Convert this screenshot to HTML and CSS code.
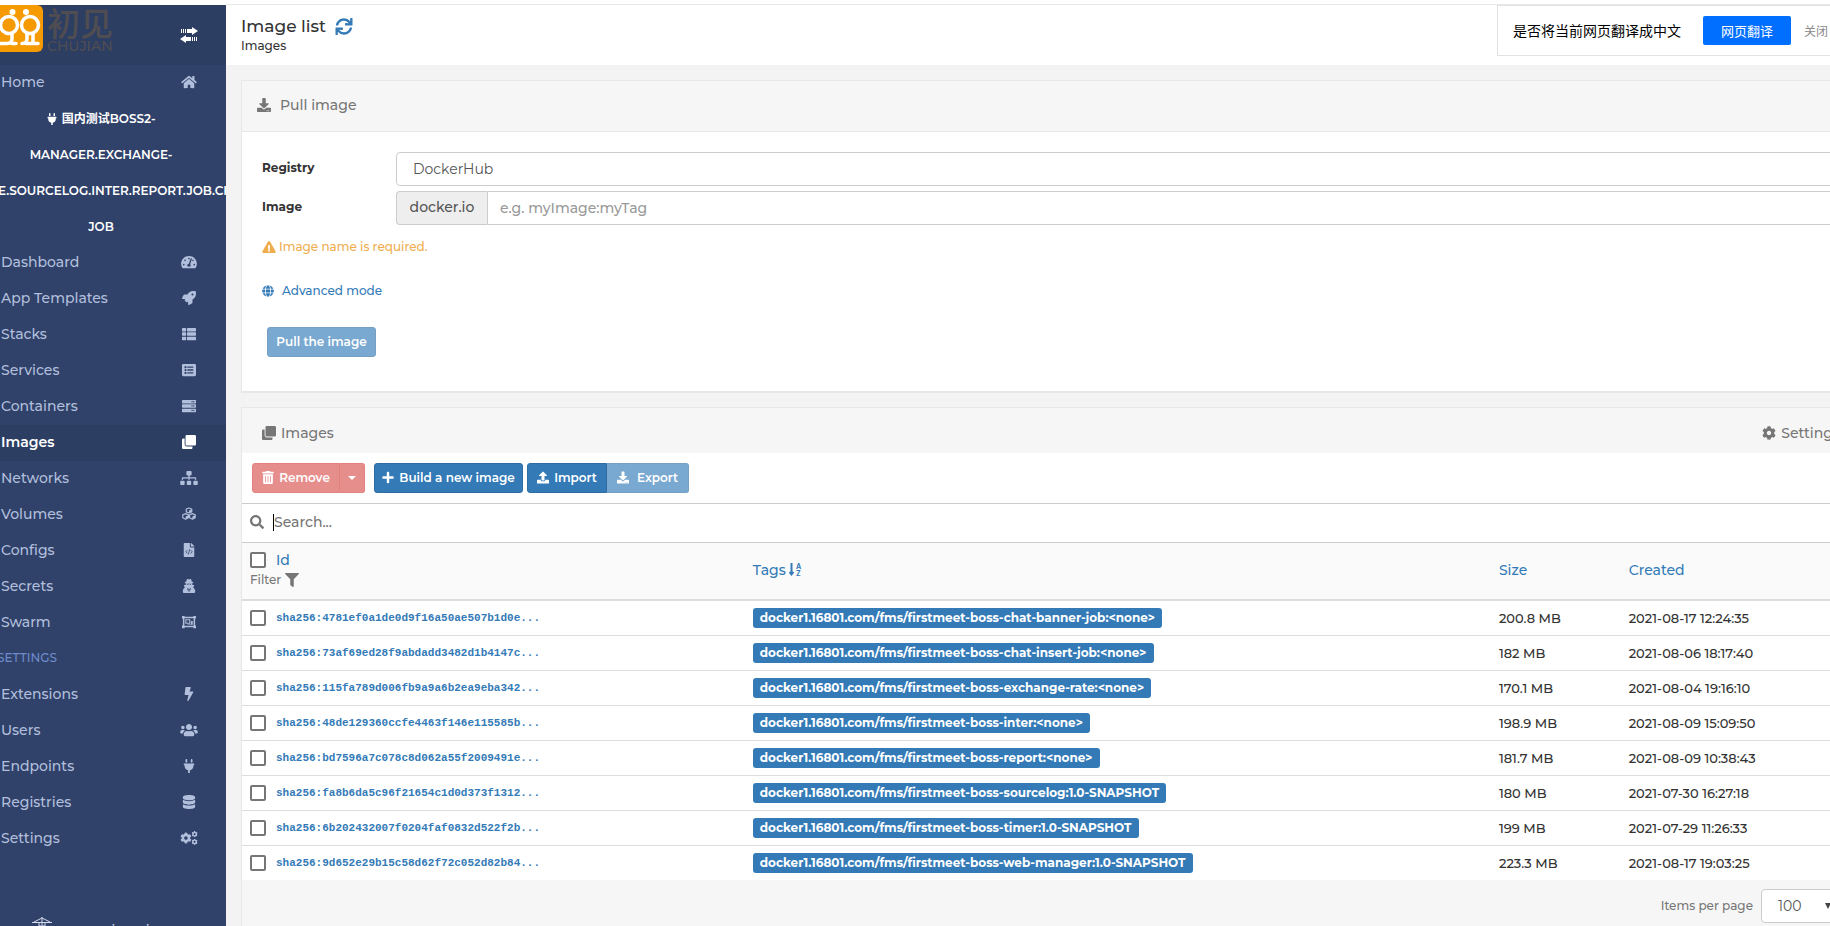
FILE: index.html
```html
<!DOCTYPE html>
<html lang="en">
<head>
<meta charset="utf-8">
<title>Image list</title>
<link rel="stylesheet" href="styles.css">
</head>
<body>
<svg class="sprite" aria-hidden="true">
  <symbol id="home" viewBox="0 0 576 512"><path d="M280.37 148.26L96 300.11V464a16 16 0 0 0 16 16l112.06-.29a16 16 0 0 0 15.92-16V368a16 16 0 0 1 16-16h64a16 16 0 0 1 16 16v95.64a16 16 0 0 0 16 16.05L464 480a16 16 0 0 0 16-16V300L295.67 148.26a12.19 12.19 0 0 0-15.3 0zM571.6 251.47L488 182.56V44.05a12 12 0 0 0-12-12h-56a12 12 0 0 0-12 12v72.61L318.47 43a48 48 0 0 0-61 0L4.34 251.47a12 12 0 0 0-1.6 16.9l25.5 31A12 12 0 0 0 45.15 301l235.22-193.74a12.19 12.19 0 0 1 15.3 0L530.9 301a12 12 0 0 0 16.9-1.6l25.5-31a12 12 0 0 0-1.7-16.93z"/></symbol>
  <symbol id="dashboard" viewBox="0 0 576 512"><path d="M288 32C128.94 32 0 160.94 0 320c0 52.8 14.25 102.26 39.06 144.8 5.61 9.62 16.3 15.2 27.44 15.2h443c11.14 0 21.83-5.58 27.44-15.2C561.75 422.26 576 372.8 576 320c0-159.06-128.94-288-288-288zm0 64c14.71 0 26.58 10.13 30.32 23.65-1.11 2.26-2.64 4.23-3.45 6.67l-9.22 27.67c-5.13 3.49-10.97 6.01-17.64 6.01-17.67 0-32-14.33-32-32S270.33 96 288 96zM96 384c-17.67 0-32-14.33-32-32s14.33-32 32-32 32 14.33 32 32-14.33 32-32 32zm48-160c-17.67 0-32-14.33-32-32s14.33-32 32-32 32 14.33 32 32-14.33 32-32 32zm246.77-72.41l-61.33 184C343.13 347.33 352 364.54 352 384c0 11.72-3.38 22.55-8.88 32H232.88c-5.5-9.45-8.88-20.28-8.88-32 0-33.94 26.5-61.43 59.9-63.59l61.34-184.01c4.17-12.56 17.73-19.45 30.36-15.17 12.57 4.19 19.35 17.79 15.17 30.36zm14.66 57.2l15.52-46.55c3.47-1.29 7.13-2.23 11.05-2.23 17.67 0 32 14.33 32 32s-14.33 32-32 32c-11.38-.01-20.89-6.28-26.57-15.22zM480 384c-17.67 0-32-14.33-32-32s14.33-32 32-32 32 14.33 32 32-14.33 32-32 32z"/></symbol>
  <symbol id="rocket" viewBox="0 0 512 512"><path d="M505.12019,19.09375c-1.18945-5.53125-6.65819-11-12.207-12.1875C460.716,0,435.507,0,410.40747,0,307.17523,0,245.26909,55.20312,199.05238,128H94.83772c-16.34763.01562-35.55658,11.875-42.88664,26.48438L2.51562,253.29688A28.4,28.4,0,0,0,0,264a24.00867,24.00867,0,0,0,24.00582,24H127.81618l-22.47457,22.46875c-11.36521,11.36133-12.99607,32.25781,0,45.25L156.24582,406.625c11.15623,11.1875,32.15619,13.15625,45.27726,0l22.47457-22.46875V488a24.00867,24.00867,0,0,0,24.00581,24,28.55934,28.55934,0,0,0,10.707-2.51562l98.72834-49.39063c14.62888-7.29687,26.50776-26.5,26.50776-42.85937V312.79688c72.59753-46.3125,128.03493-108.40626,128.03493-211.09376C512.07526,76.5,512.07526,51.29688,505.12019,19.09375ZM384.04033,168A40,40,0,1,1,424.05,128,40.02322,40.02322,0,0,1,384.04033,168Z"/></symbol>
  <symbol id="th-list" viewBox="0 0 512 512"><path d="M24 32h102a24 24 0 0 1 24 24v80a24 24 0 0 1-24 24H24a24 24 0 0 1-24-24V56a24 24 0 0 1 24-24zM205 32h283a24 24 0 0 1 24 24v80a24 24 0 0 1-24 24H205a24 24 0 0 1-24-24V56a24 24 0 0 1 24-24zM24 192h102a24 24 0 0 1 24 24v80a24 24 0 0 1-24 24H24a24 24 0 0 1-24-24v-80a24 24 0 0 1 24-24zM205 192h283a24 24 0 0 1 24 24v80a24 24 0 0 1-24 24H205a24 24 0 0 1-24-24v-80a24 24 0 0 1 24-24zM24 352h102a24 24 0 0 1 24 24v80a24 24 0 0 1-24 24H24a24 24 0 0 1-24-24v-80a24 24 0 0 1 24-24zM205 352h283a24 24 0 0 1 24 24v80a24 24 0 0 1-24 24H205a24 24 0 0 1-24-24v-80a24 24 0 0 1 24-24z"/></symbol>
  <symbol id="list-alt" viewBox="0 0 512 512"><path fill-rule="evenodd" d="M48 32h416a48 48 0 0 1 48 48v352a48 48 0 0 1-48 48H48a48 48 0 0 1-48-48V80a48 48 0 0 1 48-48zM128 112a40 40 0 1 0 .1 0zM128 216a40 40 0 1 0 .1 0zM128 320a40 40 0 1 0 .1 0zM204 128h200a12 12 0 0 1 12 12v24a12 12 0 0 1-12 12H204a12 12 0 0 1-12-12v-24a12 12 0 0 1 12-12zM204 232h200a12 12 0 0 1 12 12v24a12 12 0 0 1-12 12H204a12 12 0 0 1-12-12v-24a12 12 0 0 1 12-12zM204 336h200a12 12 0 0 1 12 12v24a12 12 0 0 1-12 12H204a12 12 0 0 1-12-12v-24a12 12 0 0 1 12-12z"/></symbol>
  <symbol id="server" viewBox="0 0 512 512"><path fill-rule="evenodd" d="M24 32h464a24 24 0 0 1 24 24v80a24 24 0 0 1-24 24H24a24 24 0 0 1-24-24V56a24 24 0 0 1 24-24zM432 72a24 24 0 1 0 .1 0zM368 72a24 24 0 1 0 .1 0zM24 192h464a24 24 0 0 1 24 24v80a24 24 0 0 1-24 24H24a24 24 0 0 1-24-24v-80a24 24 0 0 1 24-24zM432 232a24 24 0 1 0 .1 0zM368 232a24 24 0 1 0 .1 0zM24 352h464a24 24 0 0 1 24 24v80a24 24 0 0 1-24 24H24a24 24 0 0 1-24-24v-80a24 24 0 0 1 24-24zM432 392a24 24 0 1 0 .1 0zM368 392a24 24 0 1 0 .1 0z"/></symbol>
  <symbol id="clone" viewBox="0 0 512 512"><path d="M464 0c26.51 0 48 21.49 48 48v288c0 26.51-21.49 48-48 48H176c-26.51 0-48-21.49-48-48V48c0-26.51 21.49-48 48-48h288M176 416c-44.112 0-80-35.888-80-80V128H48c-26.51 0-48 21.49-48 48v288c0 26.51 21.49 48 48 48h288c26.51 0 48-21.49 48-48v-48H176z"/></symbol>
  <symbol id="sitemap" viewBox="0 0 640 512"><path d="M128 352H32c-17.67 0-32 14.33-32 32v96c0 17.67 14.33 32 32 32h96c17.67 0 32-14.33 32-32v-96c0-17.67-14.33-32-32-32zm-24-80h192v48h48v-48h192v48h48v-57.59c0-21.17-17.23-38.41-38.41-38.41H344v-64h40c17.67 0 32-14.33 32-32V32c0-17.67-14.33-32-32-32H256c-17.67 0-32 14.33-32 32v96c0 17.67 14.33 32 32 32h40v64H94.41C73.23 224 56 241.23 56 262.41V320h48v-48zm264 80h-96c-17.67 0-32 14.33-32 32v96c0 17.67 14.33 32 32 32h96c17.67 0 32-14.33 32-32v-96c0-17.67-14.33-32-32-32zm240 0h-96c-17.67 0-32 14.33-32 32v96c0 17.67 14.33 32 32 32h96c17.67 0 32-14.33 32-32v-96c0-17.67-14.33-32-32-32z"/></symbol>
  <symbol id="cubes" viewBox="0 0 512 512"><g stroke="currentColor" stroke-width="44" stroke-linejoin="round" fill="none"><path d="M256 36l100 38v104l-100 42-100-42V74zM132 244l102 40v112l-102 52-104-52V284zM380 244l104 40v112l-104 52-102-52V284z"/></g><path d="M256 130l96-44v92l-96 42zM134 344l98-44v96l-98 48zM378 344l98-44v96l-98 48z"/></symbol>
  <symbol id="file-code" viewBox="0 0 384 512"><path d="M384 121.941V128H256V0h6.059c6.365 0 12.47 2.529 16.971 7.029l97.941 97.941A24.005 24.005 0 0 1 384 121.941zM224 136V0H24C10.745 0 0 10.745 0 24v464c0 13.255 10.745 24 24 24h336c13.255 0 24-10.745 24-24V160H248c-13.2 0-24-10.8-24-24z"/><path class="cut" d="M130 260l-56 62 56 62M254 260l56 62-56 62M218 228l-50 186"/></symbol>
  <symbol id="user-secret" viewBox="0 0 448 512"><path fill-rule="evenodd" d="M144 18c22-38 58-2 80-2s58-36 80 2l25 78h31c32 0 32 32 8 42l-20 6v48c0 8-4 18-8 28h52c18 0 24 12 18 26l-34 70c42 20 72 60 72 110v38c0 26-22 48-48 48H48c-26 0-48-22-48-48v-38c0-50 30-90 72-110L40 250c-6-16 2-30 18-30h50c-4-10-8-20-8-28v-48l-20-6c-24-10-24-42 8-42h31zM136 176c8 44 66 44 80 4h16c14 40 72 40 80-4zM152 318l46 162 18-116zM296 318l-46 162-18-116z"/></symbol>
  <symbol id="object-group" viewBox="0 0 512 512"><path fill-rule="evenodd" d="M0 32h96v32h320V32h96v96h-32v256h32v96h-96v-32H96v32H0v-96h32V128H0zM88 120v272h336V120zM120 152h184v168H120zM160 192v88h104v-88zM328 216h64v144H200v-20h128z"/></symbol>
  <symbol id="bolt" viewBox="0 0 320 512"><path d="M296 160H180.6l42.6-129.8C227.2 15 215.7 0 200 0H56C44 0 33.8 8.9 32.2 20.8l-32 240C-1.7 275.2 9.5 288 24 288h118.7L96.6 482.5c-3.6 15.2 8 29.5 23.3 29.5 8.4 0 16.4-4.4 20.8-12l176-304c9.3-15.9-2.2-36-20.7-36z"/></symbol>
  <symbol id="users" viewBox="0 0 640 512"><path d="M96 224c35.3 0 64-28.7 64-64s-28.7-64-64-64-64 28.7-64 64 28.7 64 64 64zm448 0c35.3 0 64-28.7 64-64s-28.7-64-64-64-64 28.7-64 64 28.7 64 64 64zm32 32h-64c-17.6 0-33.5 7.1-45.1 18.6 40.3 22.1 68.9 62 75.1 109.4h66c17.7 0 32-14.3 32-32v-32c0-35.3-28.7-64-64-64zm-256 0c61.9 0 112-50.1 112-112S381.9 32 320 32 208 82.1 208 144s50.1 112 112 112zm76.8 32h-8.3c-20.8 10-43.9 16-68.5 16s-47.6-6-68.5-16h-8.3C179.6 288 128 339.6 128 403.2V432c0 26.5 21.5 48 48 48h288c26.5 0 48-21.5 48-48v-28.8c0-63.6-51.6-115.2-115.2-115.2zm-223.7-13.4C161.5 263.1 145.6 256 128 256H64c-35.3 0-64 28.7-64 64v32c0 17.7 14.3 32 32 32h65.9c6.3-47.4 34.9-87.3 75.2-109.4z"/></symbol>
  <symbol id="plug" viewBox="0 0 384 512"><path d="M320 32a32 32 0 0 0-64 0v96h64zm48 128H16A16 16 0 0 0 0 176v32a16 16 0 0 0 16 16h16v32a160.07 160.07 0 0 0 128 156.8V512h64v-99.2A160.07 160.07 0 0 0 352 256v-32h16a16 16 0 0 0 16-16v-32a16 16 0 0 0-16-16zM128 32a32 32 0 0 0-64 0v96h64z"/></symbol>
  <symbol id="database" viewBox="0 0 448 512"><path d="M448 73.143v45.714C448 159.143 347.667 192 224 192S0 159.143 0 118.857V73.143C0 32.857 100.333 0 224 0s224 32.857 224 73.143zM448 176v102.857C448 319.143 347.667 352 224 352S0 319.143 0 278.857V176c48.125 33.143 136.208 48.572 224 48.572S399.874 209.143 448 176zm0 160v102.857C448 479.143 347.667 512 224 512S0 479.143 0 438.857V336c48.125 33.143 136.208 48.572 224 48.572S399.874 369.143 448 336z"/></symbol>
  <symbol id="cog" viewBox="0 0 512 512"><path d="M487.4 315.7l-42.6-24.6c4.3-23.2 4.3-47 0-70.2l42.6-24.6c4.9-2.8 7.1-8.6 5.5-14-11.1-35.6-30-67.8-54.7-94.6-3.8-4.1-10-5.1-14.8-2.3L380.8 110c-17.9-15.4-38.5-27.3-60.8-35.1V25.8c0-5.6-3.9-10.5-9.4-11.7-36.7-8.2-74.3-7.8-109.2 0-5.5 1.2-9.4 6.1-9.4 11.7V75c-22.2 7.9-42.8 19.8-60.8 35.1L88.7 85.5c-4.9-2.8-11-1.9-14.8 2.3-24.7 26.7-43.6 58.9-54.7 94.6-1.7 5.4.6 11.2 5.5 14L67.3 221c-4.3 23.2-4.3 47 0 70.2l-42.6 24.6c-4.9 2.8-7.1 8.6-5.5 14 11.1 35.6 30 67.8 54.7 94.6 3.8 4.1 10 5.1 14.8 2.3l42.6-24.6c17.9 15.4 38.5 27.3 60.8 35.1v49.2c0 5.6 3.9 10.5 9.4 11.7 36.7 8.2 74.3 7.8 109.2 0 5.5-1.2 9.4-6.1 9.4-11.7v-49.2c22.2-7.9 42.8-19.8 60.8-35.1l42.6 24.6c4.9 2.8 11 1.9 14.8-2.3 24.7-26.7 43.6-58.9 54.7-94.6 1.5-5.5-.7-11.3-5.6-14.1zM256 336c-44.1 0-80-35.9-80-80s35.9-80 80-80 80 35.9 80 80-35.9 80-80 80z"/></symbol>
  <symbol id="cogs" viewBox="0 0 640 512"><use href="#cog" x="-8" y="48" width="432" height="416"/><use href="#cog" x="410" y="0" width="230" height="230"/><use href="#cog" x="410" y="282" width="230" height="230"/></symbol>
  <symbol id="exchange" viewBox="0 0 18 16"><path d="M1 2h1v4H1zM3 2h1v4H3zM5 2h1v4H5zM7 2h5V0l6 4-6 4V6H7zM16 10h1v4h-1zM14 10h1v4h-1zM12 10h1v4h-1zM11 10H6V8l-6 4 6 4v-2h5z"/></symbol>
  <symbol id="download" viewBox="0 0 512 512"><path d="M216 0h80c13.300 0 24 10.700 24 24v168h87.700c17.800 0 26.700 21.500 14.100 34.100L269.700 378.300c-7.500 7.500-19.800 7.500-27.300 0L90.100 226.100c-12.600-12.600-3.700-34.100 14.100-34.100H192V24c0-13.300 10.700-24 24-24zm296 376v112c0 13.300-10.700 24-24 24H24c-13.300 0-24-10.700-24-24V376c0-13.300 10.700-24 24-24h146.700l49 49c20.100 20.100 52.500 20.100 72.600 0l49-49H488c13.300 0 24 10.700 24 24zm-124 88c0-11-9-20-20-20s-20 9-20 20 9 20 20 20 20-9 20-20zm64 0c0-11-9-20-20-20s-20 9-20 20 9 20 20 20 20-9 20-20z"/></symbol>
  <symbol id="upload" viewBox="0 0 512 512"><path d="M296 384h-80c-13.300 0-24-10.700-24-24V192h-87.700c-17.800 0-26.700-21.500-14.100-34.100L242.300 5.700c7.500-7.500 19.800-7.500 27.300 0l152.200 152.200c12.600 12.600 3.700 34.100-14.100 34.100H320v168c0 13.300-10.700 24-24 24zm216-8v112c0 13.300-10.700 24-24 24H24c-13.300 0-24-10.700-24-24V376c0-13.300 10.700-24 24-24h136v8c0 30.900 25.100 56 56 56h80c30.900 0 56-25.100 56-56v-8h136c13.300 0 24 10.700 24 24z"/></symbol>
  <symbol id="sync" viewBox="0 0 512 512"><path d="M440.650 12.570l4 82.770A247.160 247.160 0 0 0 255.830 8C134.730 8 33.910 94.920 12.290 209.820A12 12 0 0 0 24.090 224h49.050a12 12 0 0 0 11.670-9.260 175.910 175.910 0 0 1 317-56.940l-101.460-4.860a12 12 0 0 0-12.570 12v47.410a12 12 0 0 0 12 12H500a12 12 0 0 0 12-12V12a12 12 0 0 0-12-12h-47.370a12 12 0 0 0-11.980 12.570zM255.830 432a175.610 175.610 0 0 1-146-77.800l101.800 4.870a12 12 0 0 0 12.570-12v-47.400a12 12 0 0 0-12-12H12a12 12 0 0 0-12 12V500a12 12 0 0 0 12 12h47.350a12 12 0 0 0 12-12.600l-4.150-82.570A247.170 247.170 0 0 0 255.830 504c121.110 0 221.930-86.920 243.550-201.820a12 12 0 0 0-11.800-14.180h-49.050a12 12 0 0 0-11.670 9.260A175.860 175.860 0 0 1 255.830 432z"/></symbol>
  <symbol id="search" viewBox="0 0 512 512"><path d="M505 442.700L405.300 343c-4.500-4.500-10.600-7-17-7H372c27.600-35.300 44-79.700 44-128C416 93.100 322.900 0 208 0S0 93.100 0 208s93.100 208 208 208c48.300 0 92.700-16.400 128-44v16.300c0 6.400 2.500 12.500 7 17l99.700 99.700c9.400 9.400 24.600 9.400 33.900 0l28.300-28.300c9.400-9.400 9.400-24.600.1-34zM208 336c-70.700 0-128-57.200-128-128 0-70.700 57.200-128 128-128 70.700 0 128 57.200 128 128 0 70.700-57.200 128-128 128z"/></symbol>
  <symbol id="filter" viewBox="0 0 512 512"><path d="M487.976 0H24.028C2.710 0-8.047 25.866 7.058 40.971L192 225.941V432c0 7.831 3.821 15.170 10.237 19.662l80 55.980C298.020 518.690 320 507.493 320 487.980V225.941l184.947-184.970C520.021 25.896 509.338 0 487.976 0z"/></symbol>
  <symbol id="warning" viewBox="0 0 576 512"><path d="M569.517 440.013C587.975 472.007 564.806 512 527.940 512H48.054c-36.937 0-59.999-40.055-41.577-71.987L246.423 23.985c18.467-32.009 64.720-31.951 83.154 0l239.940 416.028zM288 354c-25.405 0-46 20.595-46 46s20.595 46 46 46 46-20.595 46-46-20.595-46-46-46zm-43.673-165.346l7.418 136c.347 6.364 5.609 11.346 11.982 11.346h48.546c6.373 0 11.635-4.982 11.982-11.346l7.418-136c.375-6.874-5.098-12.654-11.982-12.654h-63.383c-6.884 0-12.356 5.780-11.981 12.654z"/></symbol>
  <symbol id="globe" viewBox="0 0 496 512"><path d="M336.500 160C322 70.700 287.800 8 248 8s-74 62.700-88.500 152h177zM152 256c0 22.200 1.200 43.500 3.300 64h185.300c2.100-20.500 3.300-41.800 3.300-64s-1.200-43.500-3.300-64H155.300c-2.100 20.500-3.300 41.800-3.300 64zm324.700-96c-28.600-67.900-86.500-120.400-158-141.600 24.400 33.800 41.200 84.700 50 141.600h108zM177.200 18.400C105.800 39.600 47.800 92.100 19.300 160h108c8.700-56.900 25.500-107.800 49.900-141.600zM487.400 192H372.700c2.100 21 3.300 42.500 3.300 64s-1.200 43-3.300 64h114.600c5.500-20.500 8.600-41.800 8.600-64s-3.100-43.500-8.500-64zM120 256c0-21.500 1.200-43 3.300-64H8.600C3.200 212.500 0 233.800 0 256s3.200 43.500 8.600 64h114.600c-2-21-3.200-42.500-3.200-64zm39.500 96c14.500 89.300 48.700 152 88.500 152s74-62.700 88.500-152h-177zm159.300 141.600c71.400-21.200 129.400-73.700 158-141.600h-108c-8.800 56.900-25.600 107.800-50 141.600zM19.300 352c28.600 67.900 86.500 120.400 158 141.600-24.400-33.800-41.200-84.700-50-141.600h-108z"/></symbol>
  <symbol id="trash" viewBox="0 0 448 512"><path fill-rule="evenodd" d="M32 464a48 48 0 0 0 48 48h288a48 48 0 0 0 48-48V128H32zm272-256a16 16 0 0 1 32 0v224a16 16 0 0 1-32 0zm-96 0a16 16 0 0 1 32 0v224a16 16 0 0 1-32 0zm-96 0a16 16 0 0 1 32 0v224a16 16 0 0 1-32 0zM432 32H312l-9.400-18.700A24 24 0 0 0 281.100 0H166.800a23.720 23.720 0 0 0-21.400 13.300L136 32H16A16 16 0 0 0 0 48v32a16 16 0 0 0 16 16h416a16 16 0 0 0 16-16V48a16 16 0 0 0-16-16z"/></symbol>
  <symbol id="plus" viewBox="0 0 448 512"><path d="M416 208H272V64c0-17.670-14.330-32-32-32h-32c-17.670 0-32 14.330-32 32v144H32c-17.670 0-32 14.330-32 32v32c0 17.670 14.330 32 32 32h144v144c0 17.670 14.330 32 32 32h32c17.670 0 32-14.330 32-32V304h144c17.670 0 32-14.330 32-32v-32c0-17.670-14.330-32-32-32z"/></symbol>
</svg>

<div class="app">
  <aside class="sidebar">
    <div class="brand">
      <svg class="brand-mark" viewBox="0 0 43 47" aria-hidden="true">
        <rect x="-6" width="49" height="47" rx="6" fill="#f59a00"/>
        <g fill="#fff"><circle cx="12.500" cy="7" r="3"/><circle cx="26" cy="7" r="3"/></g>
        <g fill="none" stroke="#fff" stroke-width="3.500" stroke-linecap="round"><circle cx="9" cy="20" r="8.500"/><circle cx="30" cy="20" r="8.500"/><path d="M12 28.500v5q0 5-5 5H0M12 38.500h4M27 28.500v5q0 5-5 5M26 38.500h12M33 28.500v10"/></g>
      </svg>
      <div class="brand-name"><span class="brand-cn">初见</span><span class="brand-en">CHUJIAN</span></div>
      <button class="toggle" aria-label="Toggle sidebar"><svg class="toggle-icon"><use href="#exchange"/></svg></button>
    </div>
    <nav class="menu">
      <a class="item" href="#">Home<svg class="icon"><use href="#home"/></svg></a>
      <div class="endpoint"><span><svg class="icon-small"><use href="#plug"/></svg> 国内测试BOSS2-</span><span>MANAGER.EXCHANGE-</span><span class="long">E.SOURCELOG.INTER.REPORT.JOB.CH</span><span>JOB</span></div>
      <a class="item" href="#">Dashboard<svg class="icon"><use href="#dashboard"/></svg></a>
      <a class="item" href="#">App Templates<svg class="icon"><use href="#rocket"/></svg></a>
      <a class="item" href="#">Stacks<svg class="icon"><use href="#th-list"/></svg></a>
      <a class="item" href="#">Services<svg class="icon"><use href="#list-alt"/></svg></a>
      <a class="item" href="#">Containers<svg class="icon"><use href="#server"/></svg></a>
      <a class="item active" href="#">Images<svg class="icon"><use href="#clone"/></svg></a>
      <a class="item" href="#">Networks<svg class="icon"><use href="#sitemap"/></svg></a>
      <a class="item" href="#">Volumes<svg class="icon"><use href="#cubes"/></svg></a>
      <a class="item" href="#">Configs<svg class="icon"><use href="#file-code"/></svg></a>
      <a class="item" href="#">Secrets<svg class="icon"><use href="#user-secret"/></svg></a>
      <a class="item" href="#">Swarm<svg class="icon"><use href="#object-group"/></svg></a>
      <div class="section">SETTINGS</div>
      <a class="item" href="#">Extensions<svg class="icon"><use href="#bolt"/></svg></a>
      <a class="item" href="#">Users<svg class="icon"><use href="#users"/></svg></a>
      <a class="item" href="#">Endpoints<svg class="icon"><use href="#plug"/></svg></a>
      <a class="item" href="#">Registries<svg class="icon"><use href="#database"/></svg></a>
      <a class="item" href="#">Settings<svg class="icon"><use href="#cogs"/></svg></a>
    </nav>
    <div class="sidebar-foot">
      <svg class="crane" viewBox="0 0 20 24" fill="none" stroke="#d5dbea" aria-hidden="true"><path d="M0 5.500h20M2 5l8-4 8 4M10 0v20M7 5v12M13 5v12M7 9h6"/></svg>
      <span>portainer.io</span>
    </div>
  </aside>

  <main class="main">
    <header class="topbar">
      <div class="titles">
        <h1>Image list <a href="#" aria-label="Refresh"><svg class="refresh"><use href="#sync"/></svg></a></h1>
        <div class="crumb">Images</div>
      </div>
      <div class="translate">
        <span>是否将当前网页翻译成中文</span>
        <button class="translate-go">网页翻译</button>
        <button class="translate-close">关闭</button>
      </div>
    </header>

    <div class="content">
      <section class="widget">
        <h2 class="widget-head tall"><svg class="icon"><use href="#download"/></svg>Pull image</h2>
        <form class="pull">
          <div class="field"><label for="registry">Registry</label><select id="registry" class="control"><option>DockerHub</option></select></div>
          <div class="field"><label for="image">Image</label><div class="group"><span class="addon">docker.io</span><input id="image" class="control" type="text" placeholder="e.g. myImage:myTag"></div></div>
          <p class="warn"><svg class="icon-warn"><use href="#warning"/></svg>Image name is required.</p>
          <a class="advanced" href="#"><svg class="icon-small"><use href="#globe"/></svg>Advanced mode</a>
          <button class="btn primary" type="button" disabled>Pull the image</button>
        </form>
      </section>

      <section class="widget">
        <div class="widget-head"><h2><svg class="icon"><use href="#clone"/></svg>Images</h2><a class="settings" href="#"><svg class="icon"><use href="#cog"/></svg>Settings</a></div>
        <div class="toolbar">
          <div class="pair"><button class="btn danger" disabled><svg class="icon-btn"><use href="#trash"/></svg>Remove</button><button class="btn danger drop" disabled aria-label="More"><i class="caret"></i></button></div>
          <button class="btn primary build"><svg class="icon-btn"><use href="#plus"/></svg>Build a new image</button>
          <div class="pair"><button class="btn primary"><svg class="icon-btn"><use href="#upload"/></svg>Import</button><button class="btn primary" disabled><svg class="icon-btn wide"><use href="#download"/></svg>Export</button></div>
        </div>
        <div class="searchbar"><svg class="icon"><use href="#search"/></svg><i class="cursor"></i><input type="text" aria-label="Search" placeholder="Search..."></div>
        <table class="images">
          <colgroup><col class="c-id"><col class="c-tags"><col class="c-size"><col class="c-created"></colgroup>
          <thead><tr>
            <th><div class="id-line"><input type="checkbox" aria-label="Select all"><a href="#">Id</a></div><div class="filter">Filter<svg class="icon"><use href="#filter"/></svg></div></th>
            <th><a href="#">Tags <svg class="sort" viewBox="0 0 13 14" aria-hidden="true"><path d="M2.500 0v11M.5 9l2 2.500 2-2.500"/><text x="7" y="6">A</text><text x="7" y="13">Z</text></svg></a></th>
            <th><a href="#">Size</a></th>
            <th><a href="#">Created</a></th>
          </tr></thead>
          <tbody>
            <tr><td><div class="id-line"><input type="checkbox" aria-label="Select image 1"><a class="sha" href="#">sha256:4781ef0a1de0d9f16a50ae507b1d0e...</a></div></td><td><span class="tag">docker1.16801.com/fms/firstmeet-boss-chat-banner-job:&lt;none&gt;</span></td><td>200.8 MB</td><td>2021-08-17 12:24:35</td></tr>
            <tr><td><div class="id-line"><input type="checkbox" aria-label="Select image 2"><a class="sha" href="#">sha256:73af69ed28f9abdadd3482d1b4147c...</a></div></td><td><span class="tag">docker1.16801.com/fms/firstmeet-boss-chat-insert-job:&lt;none&gt;</span></td><td>182 MB</td><td>2021-08-06 18:17:40</td></tr>
            <tr><td><div class="id-line"><input type="checkbox" aria-label="Select image 3"><a class="sha" href="#">sha256:115fa789d006fb9a9a6b2ea9eba342...</a></div></td><td><span class="tag">docker1.16801.com/fms/firstmeet-boss-exchange-rate:&lt;none&gt;</span></td><td>170.1 MB</td><td>2021-08-04 19:16:10</td></tr>
            <tr><td><div class="id-line"><input type="checkbox" aria-label="Select image 4"><a class="sha" href="#">sha256:48de129360ccfe4463f146e115585b...</a></div></td><td><span class="tag">docker1.16801.com/fms/firstmeet-boss-inter:&lt;none&gt;</span></td><td>198.9 MB</td><td>2021-08-09 15:09:50</td></tr>
            <tr><td><div class="id-line"><input type="checkbox" aria-label="Select image 5"><a class="sha" href="#">sha256:bd7596a7c078c8d062a55f2009491e...</a></div></td><td><span class="tag">docker1.16801.com/fms/firstmeet-boss-report:&lt;none&gt;</span></td><td>181.7 MB</td><td>2021-08-09 10:38:43</td></tr>
            <tr><td><div class="id-line"><input type="checkbox" aria-label="Select image 6"><a class="sha" href="#">sha256:fa8b6da5c96f21654c1d0d373f1312...</a></div></td><td><span class="tag">docker1.16801.com/fms/firstmeet-boss-sourcelog:1.0-SNAPSHOT</span></td><td>180 MB</td><td>2021-07-30 16:27:18</td></tr>
            <tr><td><div class="id-line"><input type="checkbox" aria-label="Select image 7"><a class="sha" href="#">sha256:6b202432007f0204faf0832d522f2b...</a></div></td><td><span class="tag">docker1.16801.com/fms/firstmeet-boss-timer:1.0-SNAPSHOT</span></td><td>199 MB</td><td>2021-07-29 11:26:33</td></tr>
            <tr><td><div class="id-line"><input type="checkbox" aria-label="Select image 8"><a class="sha" href="#">sha256:9d652e29b15c58d62f72c052d82b84...</a></div></td><td><span class="tag">docker1.16801.com/fms/firstmeet-boss-web-manager:1.0-SNAPSHOT</span></td><td>223.3 MB</td><td>2021-08-17 19:03:25</td></tr>
          </tbody>
        </table>
        <div class="pager"><label for="per-page">Items per page</label><div class="per-page"><select id="per-page" class="control"><option>100</option></select><i class="arrow"></i></div></div>
      </section>
    </div>
  </main>
</div>
</body>
</html>
```

FILE: styles.css
```css
* { box-sizing: border-box; }

body {
  margin: 0;
  height: 100vh;
  overflow: hidden;
  background: #fff;
  color: #333;
  font: 13px/18px Montserrat, Inter, "Noto Sans CJK SC", sans-serif;
}

a { color: #337ab7; text-decoration: none; }
button, input, select { font-family: inherit; }
h1, h2, p { margin: 0; font-weight: 400; }
svg { fill: currentColor; flex: none; }

.sprite { display: none; }
.icon { width: 16px; height: 14px; }
.icon-small { width: 12px; height: 12px; }
.icon-warn { width: 14px; height: 12px; }
.cut { fill: none; stroke: #30426a; stroke-width: 30px; }

.app {
  display: flex;
  height: 100vh;
  padding-top: 4px;
  overflow: hidden;
}

/* Sidebar */
.sidebar {
  flex: none;
  width: 226px;
  margin-top: 1px;
  overflow: hidden;
  background: #30426a;
  color: #fff;
}

.brand {
  display: flex;
  align-items: flex-start;
  height: 60px;
  background: #2d3e63;
}

.brand-mark { width: 43px; height: 47px; }

.brand-name {
  display: flex;
  flex-direction: column;
  margin-left: 4px;
  color: #504d52;
  font-weight: 500;
}

.brand-cn { font: 500 33px/34px "Noto Sans CJK SC", sans-serif; }
.brand-en { font-size: 14px; line-height: 14px; }

.toggle {
  margin: 22px 28px 0 auto;
  padding: 0;
  border: 0;
  background: none;
  color: #fff;
}

.toggle-icon { display: block; width: 18px; height: 16px; }

.item {
  display: flex;
  align-items: center;
  justify-content: space-between;
  height: 36px;
  padding: 0 28px 2px 1px;
  color: #b2bfdc;
  font-size: 14px;
  font-weight: 500;
}

.item .icon { width: 18px; }
.item.active { background: #2d3e63; color: #fff; font-weight: 600; }

.endpoint {
  display: flex;
  flex-direction: column;
  padding-right: 24px;
  font-size: 12px;
  font-weight: 600;
  line-height: 36px;
  text-align: center;
  white-space: nowrap;
}

.endpoint .long { margin-left: -2px; text-align: left; }
.endpoint svg { vertical-align: -2px; }

.section {
  height: 36px;
  margin-left: -3px;
  color: #6f8bcb;
  font-size: 12px;
  font-weight: 500;
  line-height: 34px;
}

.sidebar-foot {
  display: flex;
  gap: 16px;
  padding: 56px 32px 0;
  color: #d5dbea;
  font-size: 16px;
}

.sidebar-foot span { padding-top: 10px; }
.crane { width: 20px; height: 24px; margin-top: 4px; fill: none; }

/* Main column */
.main {
  flex: 1;
  min-width: 0;
  border-top: 1px solid #e7e7e7;
  background: #f3f3f3;
}

.topbar {
  display: flex;
  justify-content: space-between;
  height: 60px;
  background: #fff;
}

.titles { padding: 10px 0 0 15px; }

h1 {
  display: flex;
  gap: 9px;
  align-items: center;
  font-size: 17px;
  font-weight: 500;
  line-height: 22px;
}

.refresh { display: block; width: 18px; height: 17px; }
.crumb { font-size: 12px; font-weight: 500; line-height: 18px; }

.translate {
  display: flex;
  align-items: center;
  height: 51px;
  margin-right: -1px;
  padding: 0 2px 0 15px;
  border: 1px solid #e3e3e3;
  color: #000;
  font-size: 14px;
  white-space: nowrap;
}

.translate button { border: 0; font-size: 12px; }

.translate .translate-go {
  width: 88px;
  height: 29px;
  margin: 0 13px 0 22px;
  border-radius: 2px;
  background: #006eff;
  color: #fff;
  font-size: 13px;
}

.translate .translate-close { padding: 0; background: none; color: #888; }

.content {
  display: flex;
  flex-direction: column;
  gap: 14px;
  margin-right: -50px;
  padding: 15px 15px 0;
}

.widget {
  border: 1px solid #e7e7e7;
  border-bottom-width: 2px;
  background: #fff;
}

.widget-head {
  display: flex;
  align-items: center;
  justify-content: space-between;
  height: 45px;
  padding: 4px 24px 0 19px;
  background: #f6f6f6;
  color: #767676;
}

.widget-head h2,
.settings {
  display: flex;
  gap: 4px;
  align-items: center;
  color: #767676;
  font-size: 14px;
  font-weight: 500;
}

.widget-head.tall {
  justify-content: flex-start;
  gap: 8px;
  height: 51px;
  padding: 0 14px 2px;
  border-bottom: 1px solid #e7e7e7;
  font-size: 14px;
  font-weight: 500;
}

.pull { padding: 20px 20px 34px; }

.field { display: flex; margin-bottom: 5px; }

.field label {
  width: 134px;
  padding-top: 7px;
  font-size: 12px;
  font-weight: 700;
}

.control {
  flex: 1;
  min-width: 0;
  height: 34px;
  border: 1px solid #ccc;
  border-radius: 4px;
  background: #fff;
  color: #555;
  font-size: 14px;
  appearance: none;
}

select.control { padding: 0 16px; }
.group { display: flex; flex: 1; }
.group .control { padding: 0 12px; border-radius: 0 4px 4px 0; font-weight: 500; }
.control::placeholder { color: #999; }

.addon {
  width: 91px;
  border: 1px solid #ccc;
  border-right: 0;
  border-radius: 4px 0 0 4px;
  background: #eee;
  color: #555;
  font-size: 14px;
  font-weight: 500;
  line-height: 30px;
  text-align: center;
}

.warn {
  display: flex;
  gap: 3px;
  align-items: center;
  padding-top: 8px;
  color: #f0ad4e;
  font-size: 12px;
  font-weight: 500;
}

.advanced {
  display: flex;
  gap: 8px;
  align-items: center;
  margin: 26px 0 27px;
  font-size: 12px;
  font-weight: 500;
}

/* Buttons */
.btn {
  display: inline-flex;
  gap: 5px;
  align-items: center;
  justify-content: center;
  height: 30px;
  padding: 0 10px 2px;
  border: 1px solid #2e6da4;
  border-radius: 3px;
  color: #fff;
  font-size: 12px;
  font-weight: 600;
  white-space: nowrap;
}

.primary { background: #337ab7; }
.danger { border-color: #d43f3a; background: #d9534f; }
.btn:disabled { opacity: .65; }
.pull .btn { width: 109px; margin-left: 5px; }
.icon-btn { width: 12px; height: 13px; }
.icon-btn.wide { margin-right: 3px; }

.toolbar {
  display: flex;
  gap: 4px;
  padding: 10px;
  border-bottom: 1px solid #ccc;
}

.pair { display: flex; }
.pair .btn:first-child { border-radius: 3px 0 0 3px; width: 80px; }
.pair .btn:last-child { border-left: 0; border-radius: 0 3px 3px 0; width: 82px; }
.pair .danger:first-child { width: 88px; }
.pair .danger.drop { width: 25px; padding-bottom: 0; }
.build { width: 149px; margin-left: 5px; }

.caret {
  border: 4px solid transparent;
  border-top-color: #fff;
  border-bottom: 0;
}

.searchbar {
  display: flex;
  align-items: center;
  height: 39px;
  padding: 0 0 2px 7px;
  border-bottom: 1px solid #ccc;
  color: #767676;
}

.cursor { width: 1px; height: 17px; margin-left: 8px; background: #000; }

.searchbar input {
  flex: 1;
  padding: 0;
  border: 0;
  outline: 0;
  font-size: 14px;
  font-weight: 500;
}

/* Table */
.images {
  width: 100%;
  border-collapse: collapse;
  table-layout: fixed;
  font-size: 13px;
  font-weight: 500;
}

.c-id { width: 31%; }
.c-tags { width: 46%; }
.c-size { width: 8%; }

.images th {
  height: 57px;
  padding: 0 0 3px 8px;
  border-bottom: 2px solid #ddd;
  background: #fafafa;
  font-size: 14px;
  font-weight: 500;
  text-align: left;
}

.images td {
  height: 35px;
  padding: 0 0 0 8px;
  border-bottom: 1px solid #ddd;
}

.images tr:last-child td { border-bottom: 0; }
.id-line { display: flex; gap: 10px; align-items: center; }

.images input {
  width: 16px;
  height: 16px;
  margin: 0;
  border: 2px solid #767676;
  border-radius: 2px;
  background: #fff;
  appearance: none;
}

.sha { font: 700 11px/16px "Liberation Mono", monospace; }

.filter {
  display: flex;
  gap: 3px;
  align-items: center;
  margin-top: 2px;
  color: #767676;
  font-size: 12px;
  font-weight: 500;
}

.tag {
  display: inline-block;
  padding: 0 7px;
  border-radius: 3px;
  background: #337ab7;
  color: #fff;
  font-size: 12px;
  font-weight: 700;
  line-height: 20px;
}

.sort { width: 13px; height: 14px; vertical-align: -2px; }
.sort path { fill: none; stroke: currentColor; stroke-width: 2px; }
.sort text { font: 700 7px Inter, sans-serif; }

.pager {
  display: flex;
  gap: 8px;
  align-items: center;
  justify-content: flex-end;
  height: 60px;
  padding: 0 33px 8px 0;
  background: #f6f6f6;
  color: #767676;
  font-size: 12px;
  font-weight: 500;
}

.per-page { display: flex; align-items: center; width: 70px; }

.arrow {
  width: 0;
  margin-left: -14px;
  border: 3px solid transparent;
  border-top: 6px solid #444;
  border-bottom: 0;
}
```
